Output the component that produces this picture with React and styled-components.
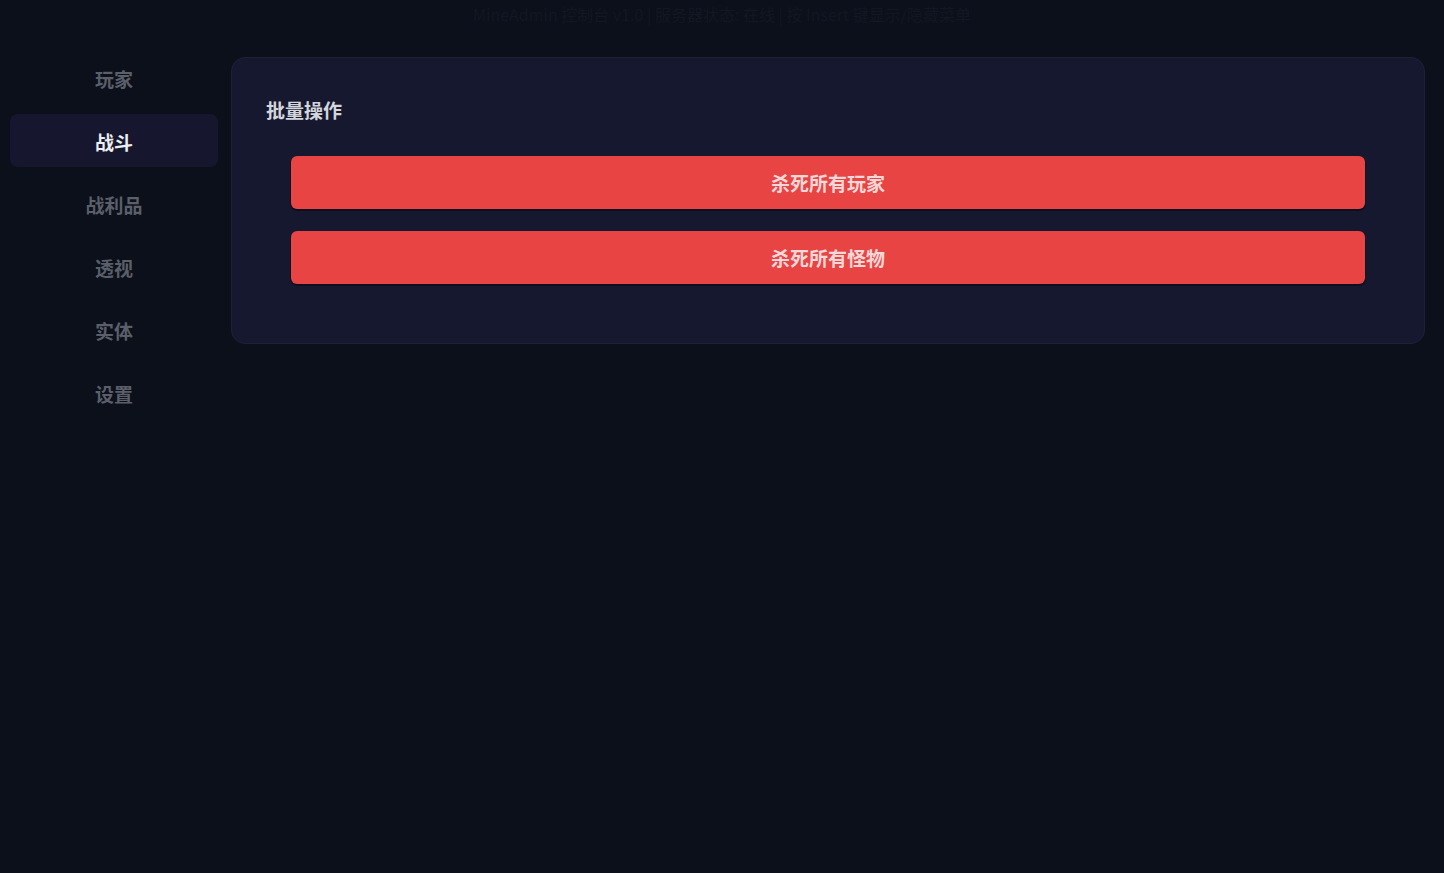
import React, { useState } from "react";
import styled, { createGlobalStyle } from "styled-components";

const GlobalStyle = createGlobalStyle`
  html, body {
    margin: 0;
    padding: 0;
    background: #0c101a;
  }
  body {
    font-family: "Noto Sans CJK SC", "Noto Sans", "Liberation Sans", sans-serif;
    color: #d1d5db;
  }
  * { box-sizing: border-box; }
`;

const Page = styled.div`
  min-height: 873px;
  background: #0c101a;
  display: flex;
  flex-direction: column;
`;

const TopBar = styled.div`
  height: 27px;
  display: flex;
  align-items: center;
  justify-content: center;
  font-size: 16px;
  color: #121723;
  white-space: nowrap;
`;

const Body = styled.div`
  display: flex;
  align-items: flex-start;
  gap: 13px;
  padding: 0 19px 0 10px;
`;

const Sidebar = styled.nav`
  width: 208px;
  flex-shrink: 0;
  display: flex;
  flex-direction: column;
  gap: 10px;
  padding-top: 24px;
`;

const NavItem = styled.button`
  height: 53px;
  width: 100%;
  border: none;
  border-radius: 8px;
  background: ${(p) => (p.$active ? "#16172e" : "transparent")};
  color: ${(p) => (p.$active ? "#eceef2" : "#5a5f69")};
  font-family: inherit;
  font-size: 19px;
  font-weight: 700;
  cursor: pointer;
  display: flex;
  align-items: center;
  justify-content: center;
  padding: 2px 0 0;
`;

const Card = styled.section`
  flex: 1;
  margin-top: 30px;
  background: #161830;
  border: 1px solid #1d2036;
  border-radius: 14px;
  padding: 36px 34px 59px;
`;

const CardTitle = styled.h2`
  margin: 0 0 30px;
  font-size: 19px;
  font-weight: 700;
  color: #d4d6dc;
  line-height: 32px;
`;

const ActionList = styled.div`
  display: flex;
  flex-direction: column;
  gap: 22px;
  padding: 0 25px;
`;

const DangerButton = styled.button`
  height: 53px;
  width: 100%;
  border: none;
  border-radius: 6px;
  background: #e84444;
  box-shadow: 0 1px 0 1px rgba(10, 8, 20, 0.55);
  color: #f4d8d8;
  font-family: inherit;
  font-size: 19px;
  font-weight: 700;
  cursor: pointer;
  display: flex;
  align-items: center;
  justify-content: center;
`;

const navItems = ["玩家", "战斗", "战利品", "透视", "实体", "设置"];

export default function App() {
  const [active, setActive] = useState("战斗");
  return (
    <>
      <GlobalStyle />
      <Page>
        <TopBar>MineAdmin 控制台 v1.0 | 服务器状态: 在线 | 按 Insert 键显示/隐藏菜单</TopBar>
        <Body>
          <Sidebar>
            {navItems.map((n) => (
              <NavItem key={n} $active={active === n} onClick={() => setActive(n)}>
                {n}
              </NavItem>
            ))}
          </Sidebar>
          <Card>
            <CardTitle>批量操作</CardTitle>
            <ActionList>
              <DangerButton>杀死所有玩家</DangerButton>
              <DangerButton>杀死所有怪物</DangerButton>
            </ActionList>
          </Card>
        </Body>
      </Page>
    </>
  );
}
